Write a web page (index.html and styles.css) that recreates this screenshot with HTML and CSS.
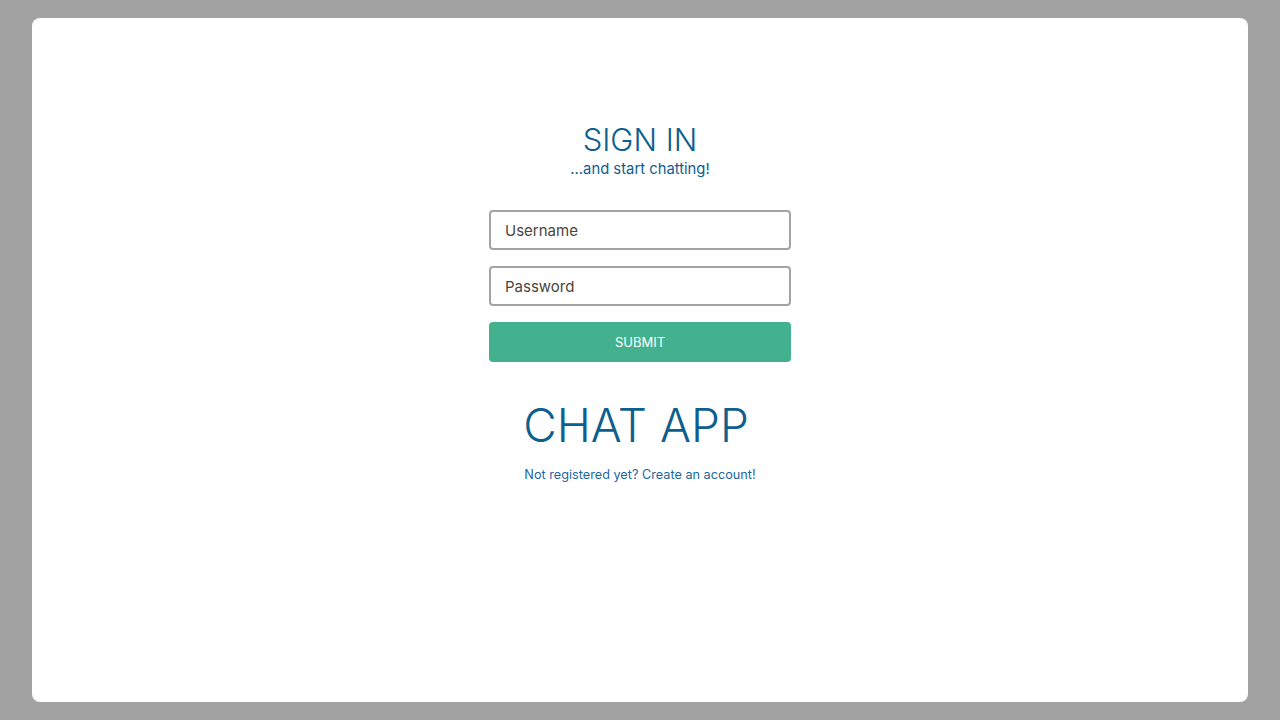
FILE: index.html
```html
<!DOCTYPE html>
<html lang="en">
<head>
<meta charset="utf-8">
<title>Chat App - Sign In</title>
<link rel="stylesheet" href="styles.css">
</head>
<body>
<main class="card">
  <section class="login">
    <header class="heading">
      <h1 class="title">SIGN IN</h1>
      <p class="subtitle">...and start chatting!</p>
    </header>
    <form class="form">
      <input class="field" type="text" placeholder="Username">
      <input class="field" type="password" placeholder="Password">
      <button class="submit" type="button">SUBMIT</button>
    </form>
    <h2 class="brand">CHAT APP</h2>
    <a class="register" href="#">Not registered yet? Create an account!</a>
  </section>
</main>
</body>
</html>
```
FILE: styles.css
```css
* { box-sizing: border-box; }
html, body { height: 100%; }
body {
  margin: 0;
  background: #a2a2a2;
  font-family: "Inter", "Noto Sans", sans-serif;
  display: flex;
  align-items: center;
  justify-content: center;
}
.card {
  width: 1216px;
  height: 684px;
  background: #ffffff;
  border-radius: 8px;
  display: flex;
  justify-content: center;
  padding-top: 101px;
}
.login {
  width: 302px;
  display: flex;
  flex-direction: column;
  align-items: center;
}
.heading { text-align: center; }
.title {
  margin: 0;
  font-weight: 300;
  font-size: 31px;
  line-height: 42px;
  color: #0e5e8e;
}
.subtitle {
  margin: 0;
  font-size: 14.8px;
  line-height: 16px;
  color: #0e5e8e;
}
.form {
  width: 100%;
  margin-top: 33px;
  display: flex;
  flex-direction: column;
  gap: 16px;
}
.field {
  width: 100%;
  height: 40px;
  border: 2px solid #a3a3a3;
  border-radius: 4px;
  padding: 0 14px;
  font-family: inherit;
  font-size: 15px;
  color: #444;
  outline: none;
}
.field::placeholder { color: #4a4540; }
.submit {
  width: 100%;
  height: 40px;
  border: none;
  border-radius: 4px;
  background: #43b18d;
  color: #ffffff;
  font-family: inherit;
  font-size: 13px;
  cursor: pointer;
}
.brand {
  margin: 35px 0 0;
  padding-right: 8px;
  font-weight: 300;
  font-size: 46px;
  line-height: 56px;
  color: #0e5e8e;
  white-space: nowrap;
}
.register {
  margin-top: 14px;
  font-size: 12.7px;
  color: #1b67a0;
  text-decoration: none;
  white-space: nowrap;
}
```
